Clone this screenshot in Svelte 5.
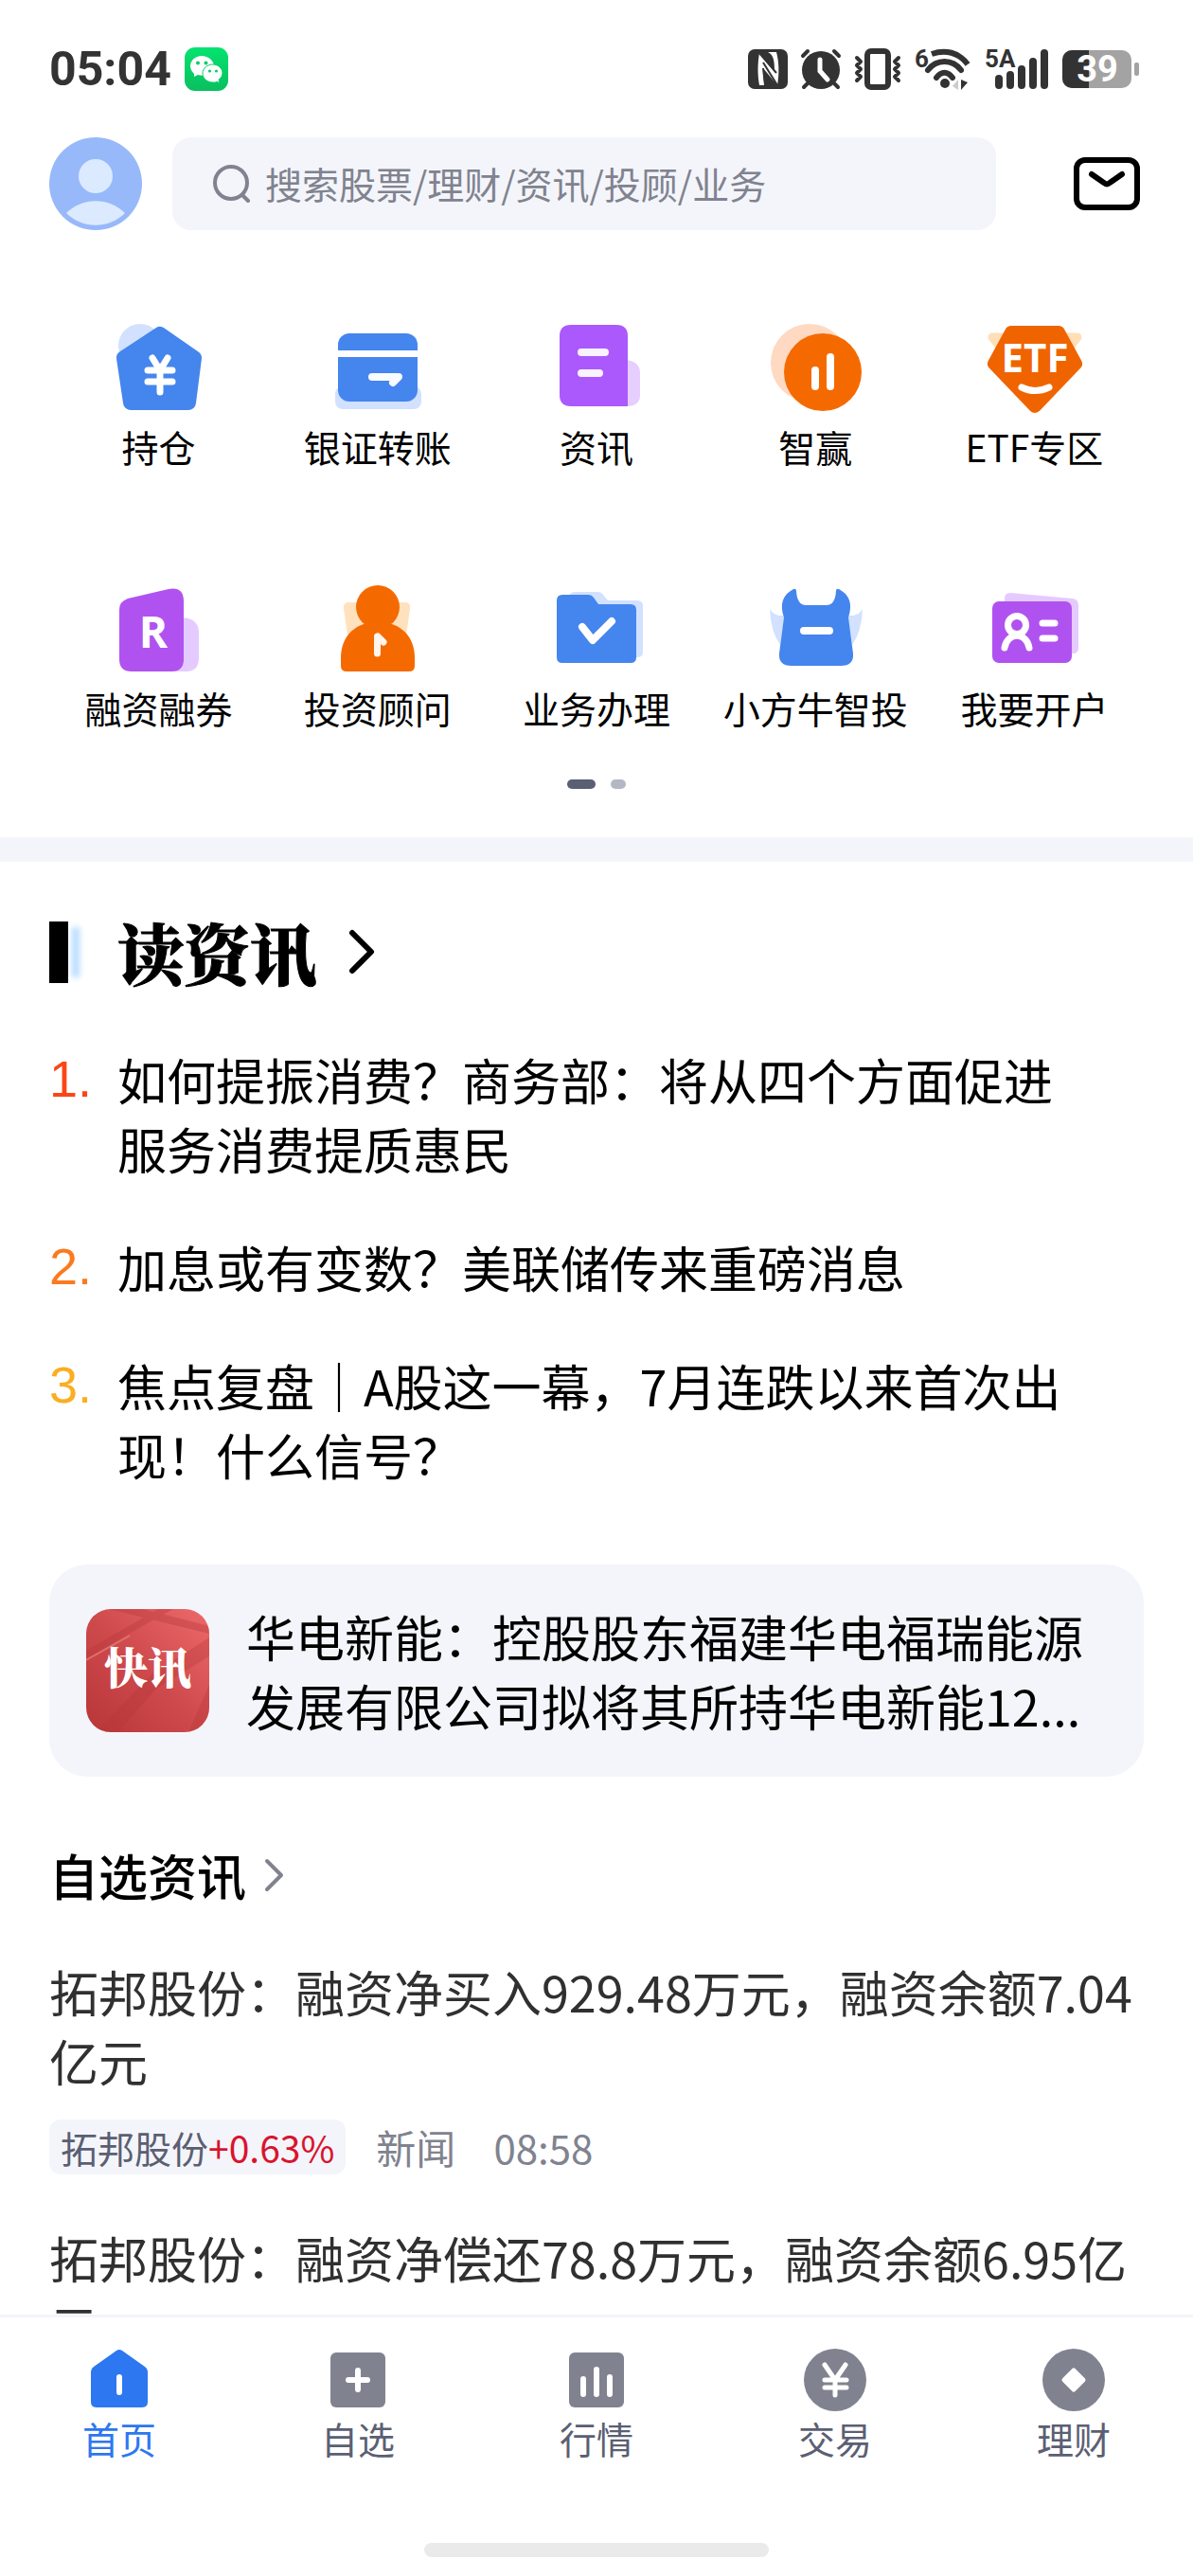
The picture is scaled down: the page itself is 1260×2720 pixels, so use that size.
<script>
  let keyword = $state('')
  let tab = $state('home')

  const entries = [
    { id: 'hold', name: '持仓' },
    { id: 'bank', name: '银证转账' },
    { id: 'info', name: '资讯' },
    { id: 'win', name: '智赢' },
    { id: 'etf', name: 'ETF专区' },
    { id: 'margin', name: '融资融券' },
    { id: 'advisor', name: '投资顾问' },
    { id: 'business', name: '业务办理' },
    { id: 'bull', name: '小方牛智投' },
    { id: 'account', name: '我要开户' },
  ]

  const headlines = [
    { title: '如何提振消费？商务部：将从四个方面促进服务消费提质惠民', color: '#fa4616' },
    { title: '加息或有变数？美联储传来重磅消息', color: '#fa7a20' },
    { title: '焦点复盘｜A股这一幕，7月连跌以来首次出现！什么信号？', color: '#faae20' },
  ]

  const news = [
    {
      title: '拓邦股份：融资净买入929.48万元，融资余额7.04亿元',
      stock: '拓邦股份',
      change: '+0.63%',
      type: '新闻',
      time: '08:58',
    },
    { title: '拓邦股份：融资净偿还78.8万元，融资余额6.95亿元' },
  ]

  const tabs = [
    { id: 'home', name: '首页' },
    { id: 'watch', name: '自选' },
    { id: 'market', name: '行情' },
    { id: 'trade', name: '交易' },
    { id: 'wealth', name: '理财' },
  ]
</script>

<div class="app">
  <div class="status">
    <span class="time">05:04</span>
    <svg class="wechat" width="46" height="46" viewBox="0 0 46 46">
      <defs>
        <linearGradient id="wx" x1="0" y1="0" x2="0" y2="1">
          <stop offset="0" stop-color="#04e36f" />
          <stop offset="1" stop-color="#0abf5f" />
        </linearGradient>
      </defs>
      <rect width="46" height="46" rx="11" fill="url(#wx)" />
      <path d="M18 9C11 9 6 14 6 20c0 3 2 6 4 8l0 3 4-2c9 3 17-3 17-9S25 9 18 9z" fill="#fff" />
      <path d="M30 18c-6 0-11 4-11 9.500s5 9.500 11 9.500c2 0 3 0 4-1l3 2-1-4c2-1 4-4 4-7 0-5-5-9-10-9z" fill="#fff" stroke="#07d067" stroke-width="1" />
      <g fill="#07d067">
        <circle cx="14" cy="16.500" r="2" /><circle cx="22.500" cy="16.500" r="2" />
        <circle cx="26.500" cy="25" r="1.600" /><circle cx="33.500" cy="25" r="1.600" />
      </g>
    </svg>
    <div class="signals">
      <svg width="42" height="42" viewBox="0 0 42 42">
        <rect width="42" height="42" rx="7" fill="#333" />
        <path d="M12 4c-2 11-2 24 0 34h6c-2-6-2-11-2-18l15 18c2-11 2-24-1-35H21c6 3 7 9 7 20z" fill="#fff" />
        <path d="M12 4l18 21M16 14l15 24M16 20l2 18" stroke="#333" stroke-width="2" />
      </svg>
      <svg width="42" height="42" viewBox="0 0 42 42">
        <circle cx="21" cy="22" r="20" fill="#333" />
        <path d="M2 7l5-5M35 2l5 5M7 36l-4 4M35 36l4 4" stroke="#333" stroke-width="4" stroke-linecap="round" />
        <path d="M20 11v12l8 9" fill="none" stroke="#fff" stroke-width="5" stroke-linecap="round" />
      </svg>
      <svg width="50" height="44" viewBox="0 0 50 44">
        <rect x="14" y="3" width="22" height="38" rx="4" fill="none" stroke="#333" stroke-width="6" />
        <path d="M3 10l4 4-4 4 4 4-4 4 4 4-4 4M47 10l-4 4 4 4-4 4 4 4-4 4 4 4" fill="none" stroke="#333" stroke-width="4" stroke-linecap="round" stroke-linejoin="round" />
      </svg>
      <svg width="60" height="44" viewBox="0 0 60 44">
        <text x="0" y="20" class="mark">6</text>
        <g fill="none" stroke="#333" stroke-width="6">
          <path d="M18 6c14-5 29-2 38 11" />
          <path d="M14 23c9-12 26-12 35 0" stroke-linecap="round" />
          <path d="M23 31c5-7 12-7 17 0" stroke-linecap="round" />
        </g>
        <circle cx="32" cy="37" r="5" fill="#333" />
        <path d="M46 33v11l-6-4z" fill="#ccc" />
        <path d="M49 33v11l7-8z" fill="#333" />
      </svg>
      <svg width="68" height="44" viewBox="0 0 68 44">
        <text x="0" y="20" class="mark">5A</text>
        <path d="M15 32v7M27 28v11M39 22v17M51 14v25M63 5v34" stroke="#333" stroke-width="8" stroke-linecap="round" />
      </svg>
      <svg width="86" height="42" viewBox="0 0 86 42">
        <defs>
          <clipPath id="cell"><rect y="1" width="73" height="40" rx="10" /></clipPath>
        </defs>
        <g clip-path="url(#cell)">
          <rect width="73" height="42" fill="#a3a3a3" />
          <rect width="28" height="42" fill="#333" />
        </g>
        <rect x="76" y="14" width="5" height="14" rx="2" fill="#a3a3a3" />
        <text x="37" y="34" text-anchor="middle" class="level">39</text>
      </svg>
    </div>
  </div>

  <header>
    <button class="avatar" aria-label="我的">
      <svg width="98" height="98" viewBox="0 0 98 98">
        <circle cx="49" cy="49" r="49" fill="#98b9f9" />
        <circle cx="49" cy="41" r="18" fill="#dceaff" />
        <path d="M18 80c17-17 45-17 62 0-17 17-45 17-62 0z" fill="#dceaff" />
      </svg>
    </button>
    <label class="search">
      <svg width="42" height="42" viewBox="0 0 42 42" fill="none" stroke="#80838f" stroke-width="4" stroke-linecap="round">
        <circle cx="19" cy="20" r="17" />
        <path d="M31 33l6 6" />
      </svg>
      <input type="text" aria-label="搜索" placeholder="搜索股票/理财/资讯/投顾/业务" bind:value={keyword} />
    </label>
    <button class="mail" aria-label="消息">
      <svg width="74" height="56" viewBox="0 0 74 56" fill="none" stroke="#000" stroke-width="6">
        <rect x="3" y="3" width="64" height="50" rx="9" />
        <path d="M19 18l13 9q3 3 6 0l13-9" stroke-linecap="round" />
      </svg>
    </button>
  </header>

  <main>
    <section class="entries">
      {#each entries as entry}
        <a href="#{entry.id}">
          <svg width="104" height="104" viewBox="0 0 104 104">
            {#if entry.id === 'hold'}
              <circle cx="32" cy="29" r="23" fill="#d1e1ff" />
              <path d="M53 17L89 42 83 89H22L15 42z" fill="#4585ee" stroke="#4585ee" stroke-width="16" stroke-linejoin="round" />
              <path d="M45 42l8 13 8-13M40 55h26M40 67h26M53 55v23" fill="none" stroke="#fff" stroke-width="7" stroke-linecap="round" stroke-linejoin="round" />
            {:else if entry.id === 'bank'}
              <rect x="7" y="72" width="91" height="24" rx="8" fill="#d1e1ff" />
              <rect x="10" y="16" width="84" height="72" rx="12" fill="#4585ee" />
              <path d="M10 37.500h84" stroke="#fff" stroke-width="7" />
              <path d="M46 62h28l-6 6" fill="none" stroke="#f8fbff" stroke-width="8" stroke-linecap="round" stroke-linejoin="round" />
            {:else if entry.id === 'info'}
              <path d="M84 44q14 2 14 14v23q0 12-14 12z" fill="#e6cffe" />
              <path d="M25 7h48q12 0 12 12v74H25q-12 0-12-12V19q0-12 12-12z" fill="#ab59fc" />
              <path d="M36 36h25M36 58h19" stroke="#f9f3ff" stroke-width="8" stroke-linecap="round" />
            {:else if entry.id === 'win'}
              <circle cx="46" cy="47" r="41" fill="#ffd9c2" />
              <circle cx="60" cy="57" r="41" fill="#f56a00" />
              <path d="M52 55v17M68 41v31" stroke="#fff" stroke-width="8" stroke-linecap="round" />
            {:else if entry.id === 'etf'}
              <path d="M8 20h90L53 78z" fill="#ffdfb8" stroke="#ffdfb8" stroke-width="9" stroke-linejoin="round" />
              <path d="M28 15h50l18 33-43 45L10 48z" fill="#f06400" stroke="#f06400" stroke-width="14" stroke-linejoin="round" />
              <text x="53" y="57" text-anchor="middle" class="glyph etf">ETF</text>
              <path d="M39 73q14 7 29 0" fill="none" stroke="#fff" stroke-width="7" stroke-linecap="round" />
            {:else if entry.id === 'margin'}
              <path d="M74 40q20 0 20 16v27q0 14-14 14H60z" fill="#e5caff" />
              <path d="M19 20l43-10q16-3 16 13v61q0 13-13 13H23q-13 0-13-13V32q0-9 9-12z" fill="#b052f0" />
              <text x="46" y="72" text-anchor="middle" class="glyph margin">R</text>
            {:else if entry.id === 'advisor'}
              <path d="M21 24h60q6 0 5 7l-6 42H22L16 31q-1-7 5-7z" fill="#ffe2bd" />
              <circle cx="52" cy="29" r="23" fill="#f56a00" />
              <path d="M37 47h30c17 6 24 20 24 36v8q0 6-6 6H19q-6 0-6-6v-8c0-16 7-30 24-36z" fill="#f56a00" />
              <path d="M51.500 60v18M52 60l6 6" stroke="#fff5ee" stroke-width="7" stroke-linecap="round" />
            {:else if entry.id === 'business'}
              <path d="M29 13h24q4 0 6 3l5 6h31q6 0 6 6v48q0 6-6 6H29q-6 0-6-6V19q0-6 6-6z" fill="#d1e1ff" />
              <path d="M16 16h27q4 0 6 3l5 7h34q6 0 6 6v50q0 6-6 6H16q-6 0-6-6V22q0-6 6-6z" fill="#4585ee" />
              <path d="M37 50l11 14 20-20" fill="none" stroke="#fff" stroke-width="8" stroke-linecap="round" stroke-linejoin="round" />
            {:else if entry.id === 'bull'}
              <path d="M4 31q4 8 16 7l-5 31Q5 55 4 31zM102 31q-4 8-16 7l5 31q10-14 11-38z" fill="#d1e1ff" />
              <path d="M29 10q3-1 3 2 1 15 10 15h22q9 0 10-15 0-3 3-2c11 6 15 15 10 30l5 38q1 13-13 13H27q-14 0-13-13l5-38c-5-15-1-24 10-30z" fill="#4585ee" />
              <path d="M40 54h27" stroke="#fff" stroke-width="8" stroke-linecap="round" />
            {:else}
              <path d="M27 14l66 6q6 1 6 7v45q0 6-6 6H21V20q0-6 6-6z" fill="#e5caff" />
              <rect x="8" y="23" width="84" height="65" rx="7" fill="#b052f0" />
              <g fill="none" stroke="#fff" stroke-width="7" stroke-linecap="round">
                <circle cx="34" cy="48" r="9.500" />
                <path d="M21 72c3-17 23-17 26 0M61 46h13M61 62h13" />
              </g>
            {/if}
          </svg>
          <span>{entry.name}</span>
        </a>
      {/each}
    </section>
    <div class="dots"><i class="on"></i><i></i></div>

    <section class="read">
      <h2>
        <i class="bar"></i>
        <a href="#read">读资讯</a>
        <svg width="30" height="50" viewBox="0 0 30 50" fill="none" stroke="#000" stroke-width="6" stroke-linecap="round" stroke-linejoin="round">
          <path d="M4 5l20 20L4 45" />
        </svg>
      </h2>
      <ol>
        {#each headlines as item, i}
          <li>
            <span class="rank" style="color: {item.color}">{i + 1}.</span>
            <a href="#news-{i + 1}">{item.title}</a>
          </li>
        {/each}
      </ol>
      <a class="flash" href="#flash">
        <span class="cover">
          <svg width="130" height="130" viewBox="0 0 130 130">
            <defs>
              <linearGradient id="red" x1="1" y1="0" x2="0" y2="1">
                <stop offset="0" stop-color="#ed6a6b" />
                <stop offset="0.500" stop-color="#cf4a4c" />
                <stop offset="1" stop-color="#b83638" />
              </linearGradient>
            </defs>
            <rect width="130" height="130" fill="url(#red)" />
            <path d="M0 52L70 12 92 0H76L0 44zM24 0l106 26v-8L60 0z" fill="#b83a3c" opacity="0.400" />
            <path d="M10 130L68 70l62-40v20L74 84 34 130zM108 130l22-50v50z" fill="#b43436" opacity="0.300" />
            <path d="M0 54l46-26" stroke="#f08a88" stroke-width="2" opacity="0.600" />
          </svg>
          <b>快讯</b>
        </span>
        <span class="text">华电新能：控股股东福建华电福瑞能源发展有限公司拟将其所持华电新能12...</span>
      </a>
    </section>

    <section class="watch">
      <h3>
        <a href="#watch-news">自选资讯</a>
        <svg width="22" height="36" viewBox="0 0 22 36" fill="none" stroke="#80838f" stroke-width="4" stroke-linecap="round" stroke-linejoin="round">
          <path d="M3 3l15 15L3 33" />
        </svg>
      </h3>
      {#each news as item}
        <article>
          <p>{item.title}</p>
          {#if item.stock}
            <div class="meta">
              <span class="tag">{item.stock}<em>{item.change}</em></span>
              <span>{item.type}</span>
              <time>{item.time}</time>
            </div>
          {/if}
        </article>
      {/each}
    </section>
  </main>

  <nav>
    <div class="tabs">
      {#each tabs as t}
        <button class:active={tab === t.id} onclick={() => (tab = t.id)}>
          <svg width="66" height="66" viewBox="0 0 66 66">
            {#if t.id === 'home'}
              <path d="M30 2q3-2 6 0l24 17q3 2 3 5v32q0 6-6 6H9q-6 0-6-6V24q0-3 3-5z" fill="currentColor" />
              <path d="M33 30v16" stroke="#fff" stroke-width="6" stroke-linecap="round" />
            {:else if t.id === 'watch'}
              <rect x="4" y="4" width="58" height="58" rx="6" fill="currentColor" />
              <path d="M33 23v20M23 33h20" stroke="#fff" stroke-width="6" stroke-linecap="round" />
            {:else if t.id === 'market'}
              <rect x="4" y="4" width="58" height="58" rx="6" fill="currentColor" />
              <path d="M19 32v16M33 22v26M47 30v18" stroke="#fff" stroke-width="6" stroke-linecap="round" />
            {:else if t.id === 'trade'}
              <circle cx="33" cy="33" r="33" fill="currentColor" />
              <path d="M22 17l11 16 11-16M22 33h23M22 41h23M33 33v16" fill="none" stroke="#fff" stroke-width="5" stroke-linecap="round" stroke-linejoin="round" />
            {:else}
              <circle cx="33" cy="33" r="33" fill="currentColor" />
              <path d="M33 23l10 10-10 10-10-10z" fill="#fff" stroke="#fff" stroke-width="5" stroke-linejoin="round" />
            {/if}
          </svg>
          <span>{t.name}</span>
        </button>
      {/each}
    </div>
    <div class="indicator"></div>
  </nav>
</div>

<style>
  :global(body) {
    margin: 0;
    background: #fff;
  }
  .app {
    display: flex;
    flex-direction: column;
    height: 100vh;
    overflow: hidden;
    color: #000;
    font-family: 'Noto Sans CJK SC', 'Noto Sans', sans-serif;
    & a {
      color: inherit;
      text-decoration: none;
    }
    & button {
      padding: 0;
      border: none;
      background: none;
      font-family: inherit;
      cursor: pointer;
    }
    & svg {
      display: block;
      flex: none;
      overflow: visible;
    }
  }

  .status {
    display: flex;
    align-items: center;
    gap: 14px;
    flex: none;
    height: 145px;
    padding: 0 52px;
    color: #333;
  }
  .time {
    font: 700 50px Roboto, sans-serif;
  }
  .signals {
    display: flex;
    align-items: center;
    gap: 14px;
    margin-left: auto;
  }
  .mark {
    font: 700 26px Roboto, sans-serif;
    fill: #333;
  }
  .level {
    font: 700 38px Roboto, sans-serif;
    fill: #fff;
  }

  header {
    display: flex;
    align-items: center;
    flex: none;
    padding: 0 52px;
  }
  .search {
    display: flex;
    align-items: center;
    flex: 1;
    gap: 13px;
    height: 98px;
    margin: 0 82px 0 32px;
    padding: 0 43px;
    border-radius: 20px;
    background: #f4f5fa;
    & input {
      flex: 1;
      min-width: 0;
      padding: 0 0 2px;
      border: none;
      outline: none;
      background: none;
      color: #000;
      font-family: inherit;
      font-size: 39px;
    }
    & input::placeholder {
      color: #80838f;
      opacity: 1;
    }
  }

  main {
    flex: 1;
    min-height: 0;
    overflow: hidden;
  }
  .entries {
    display: grid;
    grid-template-columns: repeat(5, 1fr);
    row-gap: 113px;
    padding: 93px 52px 0;
    & a {
      display: flex;
      flex-direction: column;
      align-items: center;
      gap: 3px;
    }
    & span {
      font-size: 39px;
      line-height: 56px;
      white-space: nowrap;
    }
  }
  .glyph {
    font-family: 'Open Sans', sans-serif;
    font-weight: 700;
    fill: #fff;
  }
  .etf {
    font-family: 'Liberation Sans Narrow', 'Open Sans', sans-serif;
    font-size: 42px;
  }
  .margin {
    font-size: 46px;
  }
  .dots {
    display: flex;
    justify-content: center;
    gap: 16px;
    padding: 48px 0 51px;
    border-bottom: 26px solid #f4f5fa;
    & i {
      width: 16px;
      height: 10px;
      border-radius: 5px;
      background: #b4b8c5;
    }
    & .on {
      width: 30px;
      background: #5b5f73;
    }
  }

  .read {
    padding: 46px 52px 0;
    & h2 {
      display: flex;
      align-items: center;
      margin: 0;
      font-family: 'Noto Serif CJK SC', 'Noto Sans CJK SC', serif;
      font-size: 70px;
      font-weight: 900;
      line-height: 98px;
      -webkit-text-stroke: 1px #000;
    }
    & h2 svg {
      margin-left: 34px;
    }
  }
  .bar {
    width: 20px;
    height: 65px;
    margin-right: 52px;
    background: #000;
    box-shadow: 18px 0 6px -6px #b5dbff;
  }
  ol {
    display: flex;
    flex-direction: column;
    gap: 52px;
    margin: 49px 0 80px;
    padding: 0 64px 0 0;
    list-style: none;
    font-size: 52px;
    line-height: 73px;
    & li {
      display: flex;
    }
  }
  .rank {
    flex: none;
    width: 72px;
    font-family: 'Liberation Sans', sans-serif;
    font-size: 54px;
  }
  .flash {
    display: flex;
    align-items: center;
    gap: 39px;
    padding: 39px;
    border-radius: 40px;
    background: #f4f5fa;
    & .text {
      font-size: 52px;
      line-height: 73px;
    }
  }
  .cover {
    display: grid;
    place-items: center;
    flex: none;
    overflow: hidden;
    border-radius: 26px;
    & > * {
      grid-area: 1 / 1;
    }
    & b {
      z-index: 1;
      padding-bottom: 12px;
      color: #fff;
      font-family: 'Noto Serif CJK SC', 'Noto Sans CJK SC', serif;
      font-size: 46px;
      font-weight: 900;
      line-height: 64px;
    }
  }

  .watch {
    padding: 67px 52px 0;
    & h3 {
      display: flex;
      align-items: center;
      gap: 19px;
      margin: 0 0 50px;
      font-size: 52px;
      font-weight: 500;
      line-height: 73px;
    }
  }
  article {
    margin-bottom: 51px;
    color: #303030;
    & p {
      margin: 0 0 26px;
      font-size: 52px;
      line-height: 73px;
    }
  }
  .meta {
    display: flex;
    align-items: center;
    gap: 40px;
    color: #80838f;
    font-size: 42px;
    line-height: 58px;
  }
  .tag {
    margin-right: -8px;
    padding: 0 12px;
    border-radius: 12px;
    background: #f4f5fa;
    color: #5b5f73;
    font-size: 39px;
    & em {
      color: #d9142f;
      font-style: normal;
    }
  }

  nav {
    flex: none;
    padding-bottom: 20px;
    border-top: 3px solid #f4f5fa;
    background: #fff;
  }
  .tabs {
    display: flex;
    padding-top: 33px;
    & button {
      display: flex;
      flex: 1;
      flex-direction: column;
      align-items: center;
      color: #80838f;
      font-size: 39px;
      line-height: 56px;
    }
    & span {
      color: #5b5f73;
    }
    & .active,
    & .active span {
      color: #2d77f0;
    }
  }
  .indicator {
    width: 364px;
    height: 15px;
    margin: 83px auto 0;
    border-radius: 8px;
    background: #eaeaea;
  }
</style>
